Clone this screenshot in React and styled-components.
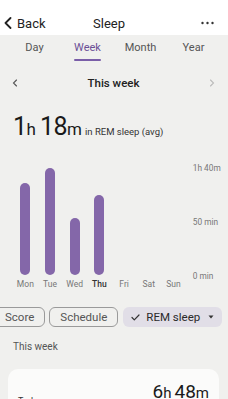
import React from "react"
import styled, { createGlobalStyle } from "styled-components"

const Global = createGlobalStyle`
    html, body {
        margin: 0;
        padding: 0;
        background: #f0f0ee;
        font-family: Roboto, "Liberation Sans", sans-serif;
        color: #1f1f1f;
        overflow: hidden;
    }
`

const Page = styled.div`
    width: 228px;
    height: 399px;
    overflow: hidden;
`

const Header = styled.div`
    height: 35px;
    background: #ffffff;
    display: grid;
    grid-template-columns: 1fr auto 1fr;
    align-items: center;
    padding: 11px 14px 0 4px;
    box-sizing: border-box;
    .back {
        display: flex;
        align-items: center;
        gap: 5px;
        font-size: 13px;
        color: #222;
    }
    .title {
        font-size: 13px;
        color: #222;
    }
    .more {
        justify-self: end;
        display: flex;
    }
`

const Tabs = styled.div`
    height: 25px;
    display: grid;
    grid-template-columns: repeat(4, 1fr);
    padding: 0 8px;
`

const Tab = styled.div`
    display: flex;
    justify-content: center;
    align-items: center;
    span {
        position: relative;
        font-size: 11px;
        color: ${p => (p.$active ? "#6b4f96" : "#555")};
        padding-bottom: 1px;
    }
    span::after {
        content: "";
        display: ${p => (p.$active ? "block" : "none")};
        position: absolute;
        left: 0;
        right: 0;
        bottom: -6px;
        height: 2px;
        border-radius: 1px;
        background: #7a5ea8;
    }
`

const WeekNav = styled.div`
    height: 45px;
    display: flex;
    align-items: center;
    justify-content: space-between;
    padding: 0 13px 0 12px;
    box-sizing: border-box;
    span {
        font-size: 11.5px;
        font-weight: 500;
        color: #222;
    }
`

const Summary = styled.div`
    height: 36px;
    padding: 7px 13px 0;
    box-sizing: border-box;
    display: flex;
    align-items: baseline;
    color: #1a1a1a;
    .num {
        font-size: 25px;
        letter-spacing: -0.5px;
    }
    .unit {
        font-size: 17px;
        margin-right: 4px;
    }
    .unit.last {
        margin-right: 3px;
    }
    .label {
        font-size: 9.5px;
        color: #333;
    }
`

const Chart = styled.div`
    height: 158px;
    display: flex;
    padding: 27px 0 0 13px;
    box-sizing: border-box;
`

const Columns = styled.div`
    display: grid;
    grid-template-columns: repeat(7, 24.7px);
`

const Column = styled.div`
    display: flex;
    flex-direction: column;
    align-items: center;
    .plot {
        height: 107px;
        display: flex;
        align-items: flex-end;
    }
    .day {
        margin-top: 4px;
        font-size: 8.5px;
        color: ${p => (p.$bold ? "#333" : "#777")};
        font-weight: ${p => (p.$bold ? 500 : 400)};
    }
`

const Bar = styled.div`
    width: 10px;
    border-radius: 5px;
    background: #8467a9;
`

const Axis = styled.div`
    margin-left: 7px;
    height: 118px;
    margin-top: -5px;
    display: flex;
    flex-direction: column;
    justify-content: space-between;
    font-size: 8.3px;
    color: #777;
`

const Chips = styled.div`
    height: 20px;
    margin-top: 8px;
    display: flex;
    gap: 4px;
    margin-left: -6px;
`

const Chip = styled.div`
    height: 20px;
    box-sizing: border-box;
    display: flex;
    align-items: center;
    gap: 6px;
    padding: 0 ${p => (p.$selected ? "7px" : "10px")};
    border-radius: 6px;
    border: 1px solid ${p => (p.$selected ? "transparent" : "#9a9a9a")};
    background: ${p => (p.$selected ? "#e1dee7" : "transparent")};
    font-size: 11.5px;
    color: ${p => (p.$selected ? "#2a2a2a" : "#555")};
    white-space: nowrap;
    margin-left: ${p => (p.$selected ? "1px" : "0")};
`

const SectionLabel = styled.div`
    margin-top: 14px;
    height: 13px;
    padding-left: 13px;
    font-size: 10px;
    color: #555;
`

const Card = styled.div`
    margin: 15px 9px 0 8px;
    height: 60px;
    background: #fbfbfa;
    border-radius: 10px;
    display: flex;
    justify-content: space-between;
    padding: 11px 10px 0 10px;
    box-sizing: border-box;
    .today {
        font-size: 9px;
        color: #333;
        margin-top: 16px;
    }
    .total {
        color: #1a1a1a;
        .n { font-size: 19px; }
        .u { font-size: 15px; margin-right: 3px; }
        .u.last { margin-right: 0; }
    }
`

const days = [
    { d: "Mon", v: 86 },
    { d: "Tue", v: 100 },
    { d: "Wed", v: 53 },
    { d: "Thu", v: 75, bold: true },
    { d: "Fri", v: 0 },
    { d: "Sat", v: 0 },
    { d: "Sun", v: 0 },
]

const App = () => {
    return (
        <Page>
            <Global />
            <Header>
                <div className="back">
                    <svg width="8" height="12" viewBox="0 0 8 12"><polyline points="6.5 1 1.5 6 6.5 11" fill="none" stroke="#222" strokeWidth="1.8" strokeLinecap="round" strokeLinejoin="round" /></svg>
                    Back
                </div>
                <div className="title">Sleep</div>
                <div className="more">
                    <svg width="13" height="4" viewBox="0 0 13 4"><circle cx="1.5" cy="2" r="1.2" fill="#333" /><circle cx="6.5" cy="2" r="1.2" fill="#333" /><circle cx="11.5" cy="2" r="1.2" fill="#333" /></svg>
                </div>
            </Header>
            <Tabs>
                <Tab><span>Day</span></Tab>
                <Tab $active><span>Week</span></Tab>
                <Tab><span>Month</span></Tab>
                <Tab><span>Year</span></Tab>
            </Tabs>
            <WeekNav>
                <svg width="6" height="8" viewBox="0 0 6 8"><polyline points="4.5 1 1.5 4 4.5 7" fill="none" stroke="#555" strokeWidth="1.1" strokeLinecap="round" /></svg>
                <span>This week</span>
                <svg width="6" height="8" viewBox="0 0 6 8"><polyline points="1.5 1 4.5 4 1.5 7" fill="none" stroke="#bbb" strokeWidth="1.1" strokeLinecap="round" /></svg>
            </WeekNav>
            <Summary>
                <span className="num">1</span><span className="unit">h</span>
                <span className="num">18</span><span className="unit last">m</span>
                <span className="label">in REM sleep (avg)</span>
            </Summary>
            <Chart>
                <Columns>
                    {days.map(item => (
                        <Column key={item.d} $bold={item.bold}>
                            <div className="plot">
                                {item.v > 0 && <Bar style={{ height: `${item.v * 1.07}px` }} />}
                            </div>
                            <div className="day">{item.d}</div>
                        </Column>
                    ))}
                </Columns>
                <Axis>
                    <span>1h 40m</span>
                    <span>50 min</span>
                    <span>0 min</span>
                </Axis>
            </Chart>
            <Chips>
                <Chip>Score</Chip>
                <Chip>Schedule</Chip>
                <Chip $selected>
                    <svg width="9" height="7" viewBox="0 0 9 7"><polyline points="1 3.5 3.3 5.8 8 1" fill="none" stroke="#333" strokeWidth="1.2" strokeLinecap="round" strokeLinejoin="round" /></svg>
                    REM sleep
                    <svg width="6" height="4" viewBox="0 0 6 4" style={{ marginLeft: 2 }}><polygon points="0.5 0.5 5.5 0.5 3 3.5" fill="#333" /></svg>
                </Chip>
            </Chips>
            <SectionLabel>This week</SectionLabel>
            <Card>
                <div className="today">Today</div>
                <div className="total">
                    <span className="n">6</span><span className="u">h</span>
                    <span className="n">48</span><span className="u last">m</span>
                </div>
            </Card>
        </Page>
    )
}

export default App
